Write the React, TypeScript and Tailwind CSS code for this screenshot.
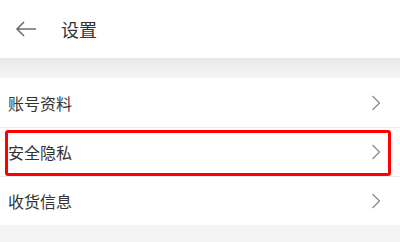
import React from "react";

const items = ["账号资料", "安全隐私", "收货信息"];

const Chevron = () => (
  <svg width="10" height="16" viewBox="0 0 10 16" fill="none">
    <path d="M1.5 1L8.5 8L1.5 15" stroke="#8c8c8c" strokeWidth="1.3" />
  </svg>
);

export default function App() {
  return (
    <div
      className="w-[400px] h-[242px] bg-[#f4f4f4] overflow-hidden"
      style={{ fontFamily: '"Noto Sans CJK SC", "Noto Sans", sans-serif' }}
    >
      {/* Header */}
      <div className="h-[58px] bg-white flex items-center">
        <div className="w-[61px] flex items-center pl-[15px]">
          <svg width="22" height="16" viewBox="0 0 22 16" fill="none">
            <path d="M21 8H2M9 1L2 8L9 15" stroke="#6e6e6e" strokeWidth="1.6" />
          </svg>
        </div>
        <span className="text-[18px] text-[#333] leading-none">设置</span>
      </div>
      <div className="h-[20px] bg-gradient-to-b from-[#e9e9e9] to-[#f5f5f5]" />

      {/* List */}
      <div className="relative bg-white">
        {items.map((label, i) => (
          <div
            key={label}
            className={`h-[49px] flex items-center justify-between pl-[8px] pr-[19px] ${
              i > 0 ? "border-t border-[#eeeeee]" : ""
            }`}
          >
            <span className="text-[16px] text-[#333] leading-none">{label}</span>
            <Chevron />
          </div>
        ))}
        {/* Highlight box */}
        <div className="absolute left-[5px] w-[386px] top-[52px] h-[46px] border-[3px] border-[#ff0000] rounded-[3px] pointer-events-none" />
      </div>
    </div>
  );
}
